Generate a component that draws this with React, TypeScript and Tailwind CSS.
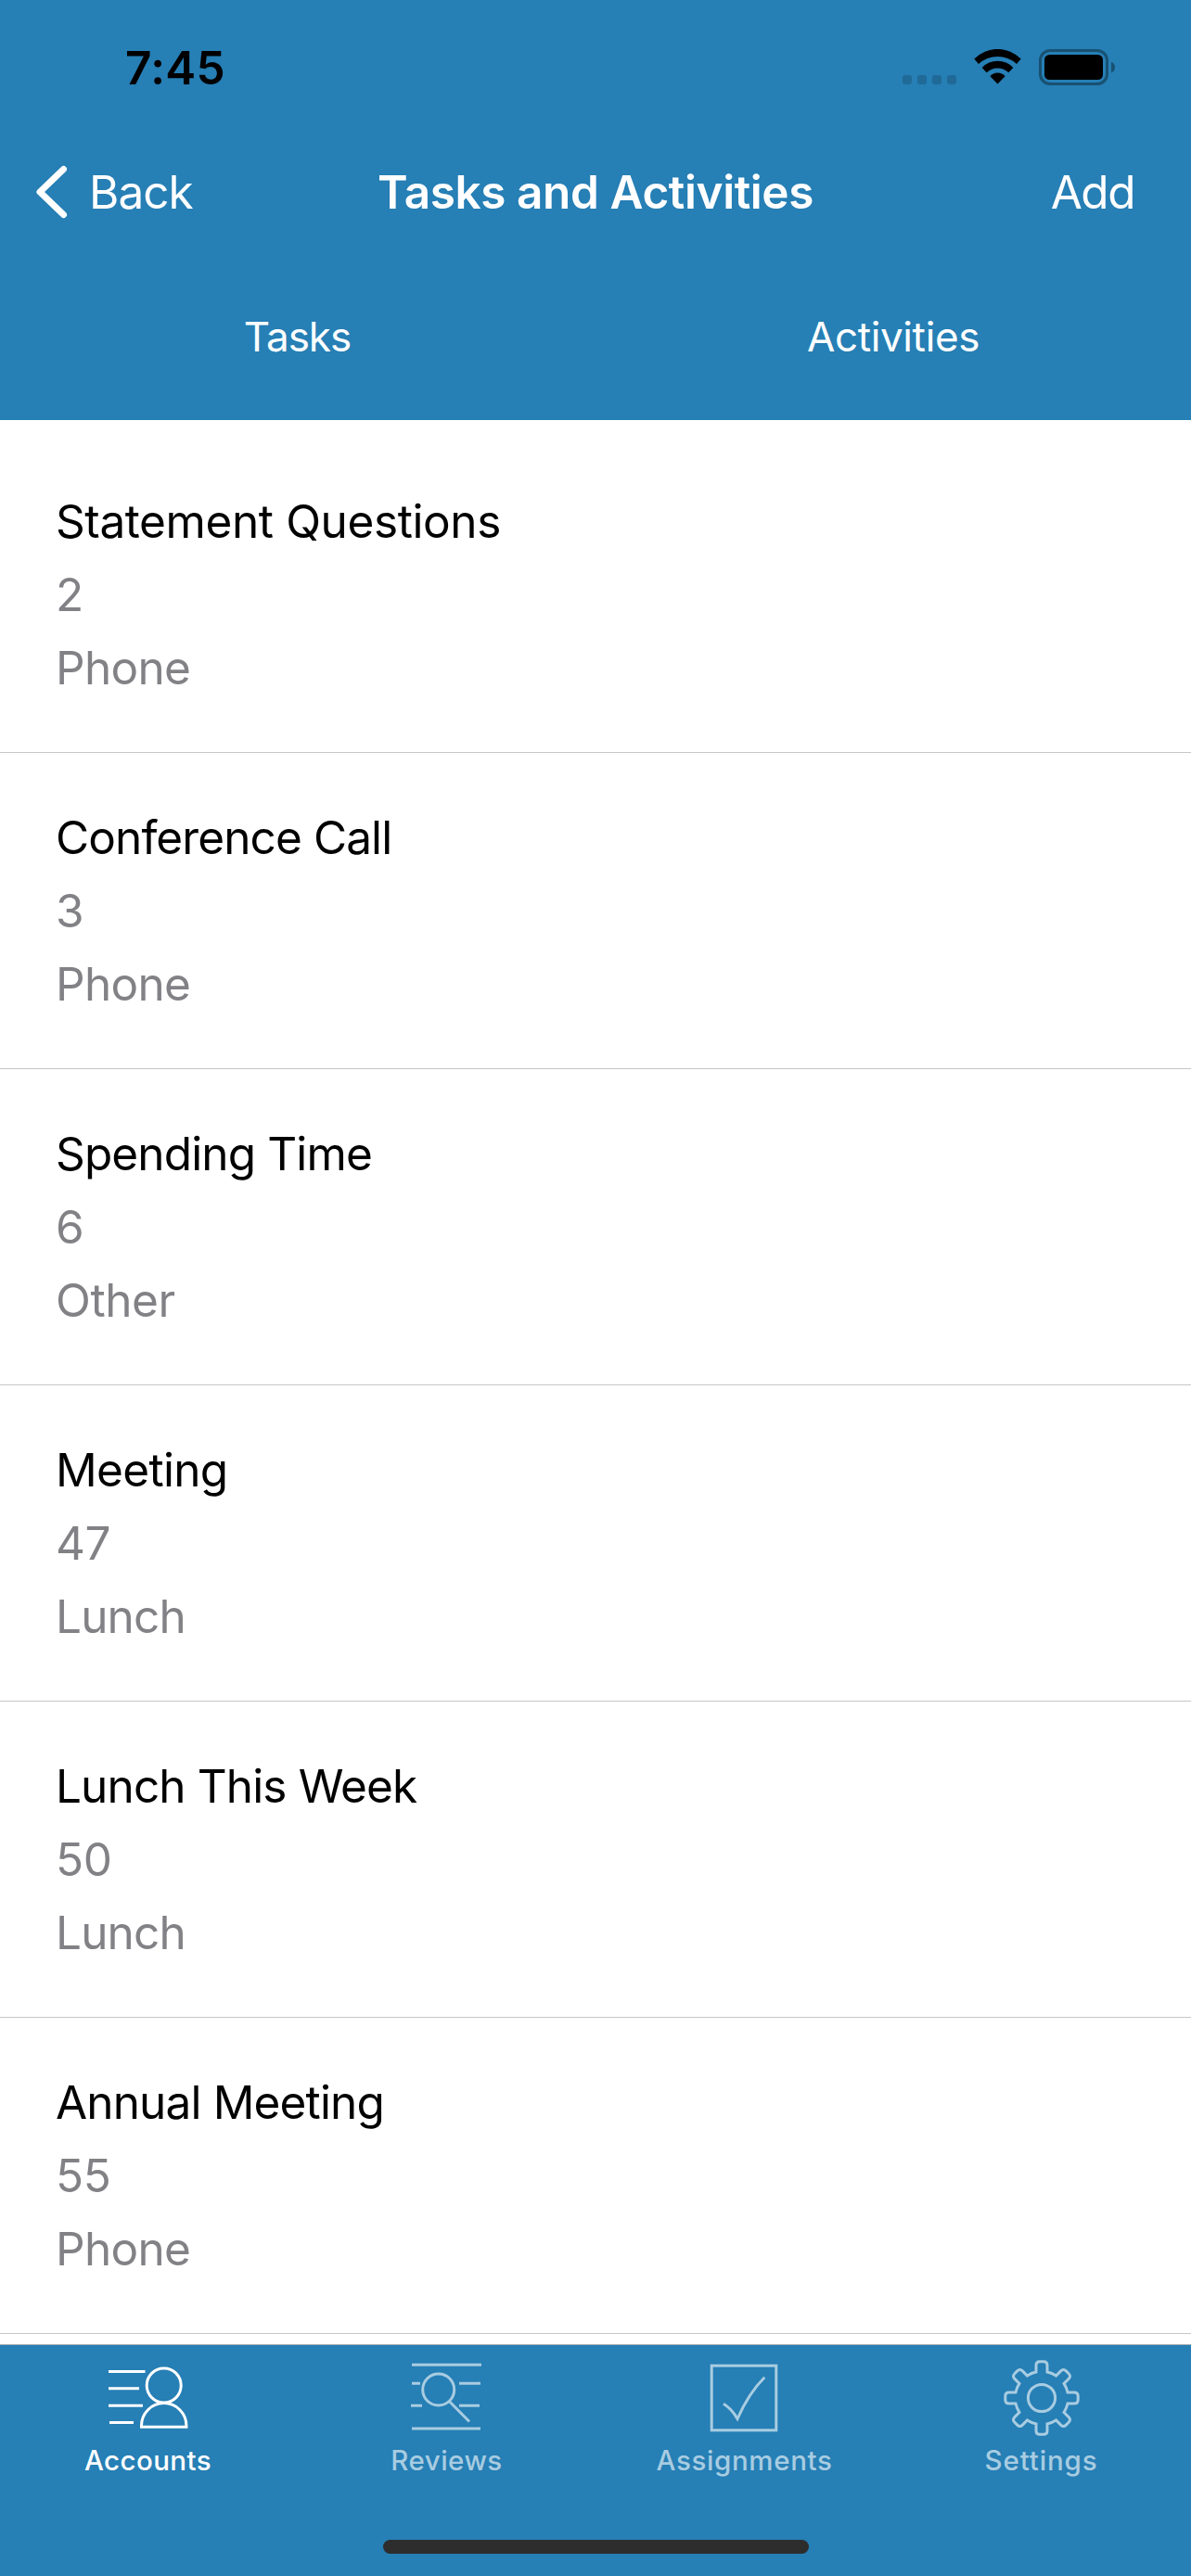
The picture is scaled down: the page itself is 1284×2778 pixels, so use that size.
import type { ReactNode } from "react";

const activities = [
  { title: "Statement Questions", id: "2", kind: "Phone", titleTrack: "tracking-[-0.4px]", kindTrack: "tracking-[-0.7px]" },
  { title: "Conference Call", id: "3", kind: "Phone", titleTrack: "tracking-[-0.9px]", kindTrack: "tracking-[-0.7px]" },
  { title: "Spending Time", id: "6", kind: "Other", titleTrack: "tracking-[-0.86px]", kindTrack: "tracking-[-0.4px]" },
  { title: "Meeting", id: "47", kind: "Lunch", titleTrack: "tracking-[-0.68px]", kindTrack: "tracking-[-0.82px]" },
  { title: "Lunch This Week", id: "50", kind: "Lunch", titleTrack: "tracking-[-0.87px]", kindTrack: "tracking-[-0.82px]" },
  { title: "Annual Meeting", id: "55", kind: "Phone", titleTrack: "tracking-[-0.85px]", kindTrack: "tracking-[-0.7px]" },
];

// Outline of an eight-toothed gear centred on (45, 45).
function gearPath() {
  const base = -28;
  const top = -39.2;
  const half = 6;
  const r = 4;
  const outline: [string, number[]][] = [
    ["L", [-half, base]],
    ["L", [-half, top + r]],
    ["Q", [-half, top, -half + r, top]],
    ["L", [half - r, top]],
    ["Q", [half, top, half, top + r]],
    ["L", [half, base]],
  ];
  const parts: string[] = [];
  for (let i = 0; i < 8; i++) {
    const cos = Math.cos((i * Math.PI) / 4);
    const sin = Math.sin((i * Math.PI) / 4);
    outline.forEach(([cmd, pts], j) => {
      const out: string[] = [];
      for (let k = 0; k < pts.length; k += 2) {
        out.push(
          (45 + pts[k] * cos - pts[k + 1] * sin).toFixed(2),
          (45 + pts[k] * sin + pts[k + 1] * cos).toFixed(2),
        );
      }
      const command = j === 0 ? (i === 0 ? "M" : "A28.6 28.6 0 0 1") : cmd;
      parts.push(`${command} ${out.join(" ")}`);
    });
  }
  return parts.join(" ") + " A28.6 28.6 0 0 1 39 17 Z";
}

function TabIcon({ children }: { children: ReactNode }) {
  return (
    <svg className="h-[90px] w-[91px]" viewBox="0 0 91 90" fill="none" stroke="currentColor" strokeWidth="3">
      {children}
    </svg>
  );
}

const tabs = [
  {
    label: "Accounts",
    style: "text-white",
    labelStyle: "tracking-[0.4px] mr-[2px]",
    icon: (
      <TabIcon>
        <path d="M2 16.5H41.5M2 34.7H35M2 53.2H39M3 71.5H29" />
        <circle cx="61.7" cy="31.5" r="18.5" />
        <path d="M37.5 76.3v-1.5a24.2 24.2 0 0 1 48.4 0v1.5z" />
      </TabIcon>
    ),
  },
  {
    label: "Reviews",
    style: "text-[#a8cce1]",
    labelStyle: "tracking-[0.47px]",
    icon: (
      <TabIcon>
        <path d="M8 9.3H83M8 29.3H17M59 29.3H82M7 53.3H19M59 53.3H81M8 78H82" />
        <circle cx="36.7" cy="36" r="17" />
        <path d="M48.5 48.8L70 70.5" />
      </TabIcon>
    ),
  },
  {
    label: "Assignments",
    style: "text-[#a8cce1]",
    labelStyle: "tracking-[0.64px]",
    icon: (
      <TabIcon>
        <rect x="10.2" y="10.2" width="69.6" height="69.6" />
        <path d="M23 51.3Q32 57 38 67.5Q50 40 67.3 22.7" />
      </TabIcon>
    ),
  },
  {
    label: "Settings",
    style: "text-[#a8cce1]",
    labelStyle: "tracking-[0.88px] mr-[2px]",
    icon: (
      <TabIcon>
        <path d={gearPath()} />
        <circle cx="45" cy="45" r="14.6" />
      </TabIcon>
    ),
  },
];

function StatusBar() {
  return (
    <div className="flex h-[141px] items-start justify-between pl-[135px] pr-[82px] pt-[43px]">
      <span className="text-[49.5px] leading-[60px] font-semibold tracking-[0.3px] text-black">7:45</span>
      <div className="mt-[10px] flex items-end">
        <div className="mb-px flex gap-1.5">
          {[0, 1, 2, 3].map((i) => (
            <span key={i} className="size-[10px] rounded-[3px] bg-[#206a97]" />
          ))}
        </div>
        <svg className="mb-px ml-[19px] h-[38px] w-[51px]" viewBox="0 0 51 38">
          <path d="M0.3 10.6A35 35 0 0 1 50.7 10.6L46 16A30.2 30.2 0 0 0 5 16Z" />
          <path d="M8.7 20A23 23 0 0 1 42.3 20L37.3 25.3A17.2 17.2 0 0 0 13.7 25.3Z" />
          <path d="M17.4 29.3A10.7 10.7 0 0 1 33.6 29.3L25.5 37.5Z" />
        </svg>
        <svg className="ml-[19px] h-[39px] w-[82px]" viewBox="0 0 82 39">
          <rect x="1.5" y="1.5" width="72" height="36" rx="10.5" fill="none" stroke="#185172" strokeWidth="3" />
          <rect x="6" y="6" width="63" height="27" rx="5.5" />
          <path d="M78 13.5Q82 15.5 82 19.5Q82 23.5 78 25.5Z" fill="#185172" />
        </svg>
      </div>
    </div>
  );
}

export default function App() {
  return (
    <div className="flex h-[2778px] w-[1284px] flex-col overflow-hidden bg-white font-['Inter',sans-serif]">
      <header className="shrink-0 bg-[#267fb5] text-white">
        <StatusBar />
        <nav className="grid h-[132px] grid-cols-[1fr_auto_1fr] items-center px-[38px] text-[49.5px] leading-[60px]">
          <button className="flex items-center justify-self-start">
            <svg className="h-[60px] w-9" viewBox="0 0 36 60" fill="none" stroke="white" strokeWidth="7" strokeLinecap="round" strokeLinejoin="round">
              <path d="M30.5 5.5L5 30L30.5 54.5" />
            </svg>
            <span className="ml-[22px] tracking-[-1px]">Back</span>
          </button>
          <h1 className="font-semibold tracking-[-0.4px]">Tasks and Activities</h1>
          <button className="mr-[23px] justify-self-end tracking-[-1.5px]">Add</button>
        </nav>
        <div className="grid h-[180px] grid-cols-2 items-center text-center text-[44px] leading-[54px]">
          <span className="mr-px tracking-[-1px]">Tasks</span>
          <span className="tracking-[-0.38px]">Activities</span>
        </div>
      </header>

      <ul className="min-h-0 flex-1 overflow-hidden pt-[18px]">
        {activities.map((item) => (
          <li
            key={item.title}
            className="h-[341px] border-b border-[#c6c6c6] pl-[60px] pt-[52px] text-[49.5px] leading-[79px] text-[#828286]"
          >
            <p className={`text-black ${item.titleTrack}`}>{item.title}</p>
            <p className="tracking-[-0.4px]">{item.id}</p>
            <p className={item.kindTrack}>{item.kind}</p>
          </li>
        ))}
      </ul>

      <footer className="h-[250px] shrink-0 border-t border-[#a9adb1] bg-[#267fb5]">
        <div className="grid h-[210px] grid-cols-4 pt-3">
          {tabs.map((tab) => (
            <button key={tab.label} className={`flex flex-col items-center gap-1 ${tab.style}`}>
              {tab.icon}
              <span className={`text-[29.5px] leading-[36px] font-medium ${tab.labelStyle}`}>{tab.label}</span>
            </button>
          ))}
        </div>
        <div className="ml-[413px] h-[15px] w-[459px] rounded-full bg-[#2d2d2d]" />
      </footer>
    </div>
  );
}
